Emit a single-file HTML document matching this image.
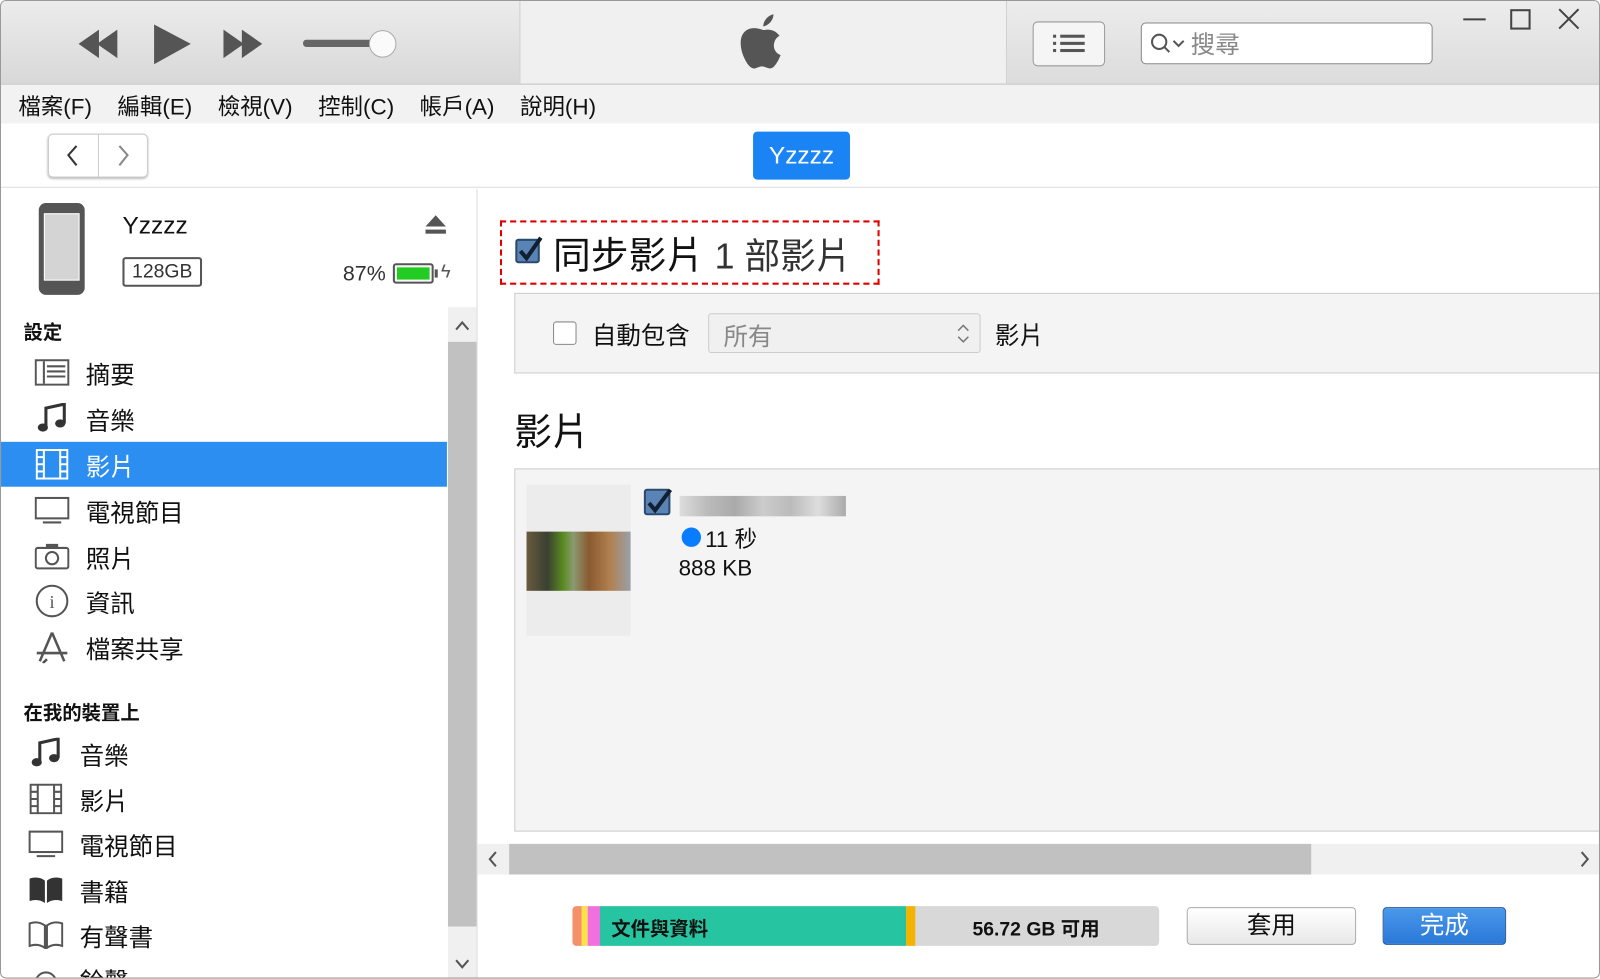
<!DOCTYPE html>
<html><head><meta charset="utf-8"><style>
*{box-sizing:border-box;margin:0;padding:0}
body{width:1600px;height:979px;overflow:hidden;background:#fff;font-family:"Liberation Sans","Noto Sans CJK TC",sans-serif;color:#111}
#w{position:absolute;left:0;top:0;width:1568px;height:959px;transform:scale(1.0204);transform-origin:0 0;border:1px solid #999;border-radius:6px;overflow:hidden;background:#fff}
.a{position:absolute}
.menu span{margin-right:25px}
.it{position:absolute;left:0;width:437px;height:44px;display:flex;align-items:center;font-size:24px}
.ic{width:34px;height:28px;margin-left:33px;margin-right:16px;display:flex;align-items:center;justify-content:center}
</style></head><body><div id="w">
<div class="a" style="left:0;top:0;width:508px;height:82px;background:linear-gradient(#ececec,#d8d8d8);border-bottom:1px solid #bbb"></div>
<div class="a" style="left:508px;top:0;width:478px;height:82px;background:#f0f0f0;border-left:1px solid #ccc;border-right:1px solid #ccc;border-bottom:1px solid #bbb"></div>
<div class="a" style="left:986px;top:0;width:582px;height:82px;background:linear-gradient(#ececec,#dcdcdc);border-bottom:1px solid #bbb"></div>
<svg class="a" style="left:70px;top:20px" width="320" height="45">
<polygon points="6,22 26,8 26,36" fill="#555"/><polygon points="24,22 44,8 44,36" fill="#555"/>
<polygon points="80,3 116,22 80,42" fill="#555"/>
<polygon points="148,8 168,22 148,36" fill="#555"/><polygon points="166,8 186,22 166,36" fill="#555"/>
<rect x="226" y="18" width="70" height="7" rx="3" fill="#666"/>
<circle cx="304" cy="22" r="13" fill="#fafafa" stroke="#aaa"/>
</svg>
<svg class="a" style="left:720px;top:12px" width="52" height="60" viewBox="0 0 52 60"><path d="M26 16c-4-1-10-3-16 1-7 5-6 17-2 26 3 7 7 12 11 11 3-1 5-2 7-2s5 2 8 2c4 0 8-8 10-13-5-2-8-7-6-13 1-3 3-5 5-6-3-4-7-6-12-6-2 0-4 1-5 0z" fill="#555"/><path d="M27 13c0-6 5-11 10-12 0 6-5 11-10 12z" fill="#555"/></svg>
<div class="a" style="left:1011px;top:20px;width:71px;height:44px;border:1px solid #999;border-radius:5px;background:#f5f5f5"></div>
<svg class="a" style="left:1030px;top:30px" width="34" height="24"><g fill="#555"><rect x="8" y="3" width="24" height="3"/><rect x="8" y="10" width="24" height="3"/><rect x="8" y="17" width="24" height="3"/><rect x="1" y="3" width="3" height="3"/><rect x="1" y="10" width="3" height="3"/><rect x="1" y="17" width="3" height="3"/></g></svg>
<div class="a" style="left:1117px;top:21px;width:286px;height:41px;border:1px solid #888;border-radius:5px;background:#fff;font-size:24px;color:#888;padding:1px 0 0 48px">搜尋</div>
<svg class="a" style="left:1126px;top:30px" width="38" height="24"><circle cx="9" cy="10" r="7" fill="none" stroke="#555" stroke-width="2"/><line x1="14" y1="15" x2="19" y2="20" stroke="#555" stroke-width="2"/><polyline points="23,9 28,14 33,9" fill="none" stroke="#555" stroke-width="2"/></svg>
<svg class="a" style="left:1430px;top:6px" width="130" height="24"><line x1="3" y1="12" x2="25" y2="12" stroke="#444" stroke-width="2"/><rect x="50" y="3" width="18" height="18" fill="none" stroke="#444" stroke-width="2"/><path d="M97 2L116 21M116 2L97 21" stroke="#444" stroke-width="2"/></svg>
<div class="a menu" style="left:0;top:82px;width:1568px;height:38px;background:#f2f2f2;font-size:22px;padding:4px 0 0 17px">
<span>檔案(F)</span><span>編輯(E)</span><span>檢視(V)</span><span>控制(C)</span><span>帳戶(A)</span><span>說明(H)</span></div>
<div class="a" style="left:0;top:120px;width:1568px;height:63px;background:#fff;border-bottom:1px solid #ddd"></div>
<div class="a" style="left:46px;top:130px;width:98px;height:43px;border:1px solid #ccc;border-radius:5px;box-shadow:0 1px 2px #bbb"></div>
<div class="a" style="left:95px;top:130px;width:1px;height:43px;background:#ccc"></div>
<svg class="a" style="left:46px;top:130px" width="98" height="43"><polyline points="28,12 20,21 28,31" fill="none" stroke="#333" stroke-width="2"/><polyline points="70,12 78,21 70,31" fill="none" stroke="#888" stroke-width="2"/></svg>
<div class="a" style="left:737px;top:128px;width:95px;height:47px;background:#1a84f5;border-radius:4px;color:#fff;font-size:24px;text-align:center;line-height:47px">Yzzzz</div>
<div class="a" style="left:466px;top:184px;width:1px;height:775px;background:#ddd"></div>
<div class="a" style="left:37px;top:198px;width:45px;height:90px;background:#555;border-radius:7px"></div>
<div class="a" style="left:42px;top:208px;width:35px;height:66px;background:#d4d4d4;border:1px solid #fff"></div>
<div class="a" style="left:119px;top:207px;font-size:24px">Yzzzz</div>
<div class="a" style="left:119px;top:251px;width:78px;height:29px;border:2px solid #555;border-radius:3px;font-size:19px;text-align:center;line-height:25px;color:#333">128GB</div>
<svg class="a" style="left:414px;top:209px" width="24" height="22"><polygon points="12,1 22,12 2,12" fill="#555"/><rect x="2" y="15" width="20" height="4" fill="#555"/></svg>
<div class="a" style="left:335px;top:256px;font-size:21px;color:#333">87%</div>
<div class="a" style="left:384px;top:257px;width:40px;height:20px;border:2px solid #555;border-radius:3px;padding:2px"><div style="width:100%;height:100%;background:#22cc22"></div></div>
<div class="a" style="left:425px;top:263px;width:3px;height:8px;background:#555"></div>
<div class="a" style="left:431px;top:255px;font-size:18px;color:#555">ϟ</div>
<div class="a" style="left:438px;top:300px;width:28px;height:659px;background:#f0f0f0"></div>
<div class="a" style="left:438px;top:334px;width:28px;height:573px;background:#c1c1c1"></div>
<svg class="a" style="left:438px;top:300px" width="28" height="659"><polyline points="8,22 14,15 20,22" fill="none" stroke="#555" stroke-width="2"/><polyline points="8,640 14,647 20,640" fill="none" stroke="#555" stroke-width="2"/></svg>
<div class="a" style="left:22px;top:310px;font-size:19px;font-weight:bold">設定</div>
<div class="it" style="top:342px"><div class="ic"><svg width="34" height="26"><rect x="1" y="1" width="32" height="24" fill="none" stroke="#555" stroke-width="2"/><path d="M9 2v22M12 7h18M12 12h18M12 17h18" stroke="#555" stroke-width="2"/></svg></div>摘要</div>
<div class="it" style="top:387px"><div class="ic"><svg width="30" height="30"><path d="M9 24V5l18-4v19" fill="none" stroke="#333" stroke-width="3"/><ellipse cx="6" cy="24" rx="5" ry="4" fill="#333"/><ellipse cx="23" cy="20" rx="5" ry="4" fill="#333"/></svg></div>音樂</div>
<div class="it" style="top:432px;background:#2b8ef0;color:#fff"><div class="ic"><svg width="32" height="30"><rect x="1" y="1" width="30" height="28" fill="none" stroke="#fff" stroke-width="2"/><path d="M8 1v28M24 1v28M1 8h7M1 15h7M1 22h7M24 8h7M24 15h7M24 22h7" stroke="#fff" stroke-width="2"/></svg></div>影片</div>
<div class="it" style="top:477px"><div class="ic"><svg width="34" height="28"><rect x="1" y="2" width="32" height="20" fill="none" stroke="#555" stroke-width="2"/><path d="M8 26h18" stroke="#555" stroke-width="2"/></svg></div>電視節目</div>
<div class="it" style="top:522px"><div class="ic"><svg width="34" height="28"><rect x="1" y="6" width="32" height="20" rx="2" fill="none" stroke="#555" stroke-width="2"/><rect x="11" y="2" width="12" height="5" fill="#555"/><circle cx="17" cy="16" r="6" fill="none" stroke="#555" stroke-width="2"/></svg></div>照片</div>
<div class="it" style="top:566px"><div class="ic"><svg width="34" height="34"><circle cx="17" cy="17" r="15" fill="none" stroke="#555" stroke-width="2"/><text x="17" y="24" font-size="18" text-anchor="middle" fill="#555" font-family="Liberation Serif">i</text></svg></div>資訊</div>
<div class="it" style="top:611px"><div class="ic"><svg width="34" height="32"><path d="M17 2L5 30M17 2l12 28M2 22h30M12 28l-4 4" fill="none" stroke="#555" stroke-width="2.5"/></svg></div>檔案共享</div>
<div class="a" style="left:22px;top:683px;font-size:19px;font-weight:bold">在我的裝置上</div>
<div class="it" style="top:715px"><div class="ic" style="margin-left:27px"><svg width="30" height="30"><path d="M9 24V5l18-4v19" fill="none" stroke="#333" stroke-width="3"/><ellipse cx="6" cy="24" rx="5" ry="4" fill="#333"/><ellipse cx="23" cy="20" rx="5" ry="4" fill="#333"/></svg></div>音樂</div>
<div class="it" style="top:760px"><div class="ic" style="margin-left:27px"><svg width="32" height="30"><rect x="1" y="1" width="30" height="28" fill="none" stroke="#555" stroke-width="2"/><path d="M8 1v28M24 1v28M1 8h7M1 15h7M1 22h7M24 8h7M24 15h7M24 22h7" stroke="#555" stroke-width="2"/></svg></div>影片</div>
<div class="it" style="top:804px"><div class="ic" style="margin-left:27px"><svg width="34" height="28"><rect x="1" y="2" width="32" height="20" fill="none" stroke="#555" stroke-width="2"/><path d="M8 26h18" stroke="#555" stroke-width="2"/></svg></div>電視節目</div>
<div class="it" style="top:849px"><div class="ic" style="margin-left:27px"><svg width="34" height="28"><path d="M1 3c6-2 11-1 15 2v22c-4-3-9-4-15-2zM33 3c-6-2-11-1-15 2v22c4-3 9-4 15-2z" fill="#333"/></svg></div>書籍</div>
<div class="it" style="top:893px"><div class="ic" style="margin-left:27px"><svg width="34" height="28"><path d="M1 3c6-2 11-1 15 2v22c-4-3-9-4-15-2zM33 3c-6-2-11-1-15 2v22c4-3 9-4 15-2z" fill="none" stroke="#555" stroke-width="2"/></svg></div>有聲書</div>
<div class="it" style="top:936px"><div class="ic" style="margin-left:27px"><svg width="30" height="28"><circle cx="15" cy="18" r="10" fill="none" stroke="#555" stroke-width="2"/></svg></div>鈴聲</div>
<div class="a" style="left:489px;top:215px;width:372px;height:63px;border:2px dashed #e00000"></div>
<div class="a" style="left:504px;top:233px;width:24px;height:24px;background:#5a84b6;border:2px solid #2a4a70;border-radius:3px"></div>
<svg class="a" style="left:504px;top:228px" width="30" height="30"><polyline points="5,17 11,24 25,4" fill="none" stroke="#102030" stroke-width="4"/></svg>
<div class="a" style="left:541px;top:219px;font-size:37px;white-space:nowrap">同步影片 <span style="font-size:35px;color:#333">1 部影片</span></div>
<div class="a" style="left:503px;top:286px;width:1070px;height:79px;background:#f4f4f4;border:1px solid #ccc"></div>
<div class="a" style="left:541px;top:314px;width:23px;height:23px;border:1px solid #888;border-radius:3px;background:#fff"></div>
<div class="a" style="left:579px;top:308px;font-size:24px">自動包含</div>
<div class="a" style="left:693px;top:306px;width:267px;height:39px;border:1px solid #ccc;border-radius:3px;background:#f0f0f0;font-size:24px;color:#888;padding:2px 0 0 14px">所有</div>
<svg class="a" style="left:934px;top:315px" width="18" height="22"><polyline points="4,8 9,3 14,8" fill="none" stroke="#777" stroke-width="1.5"/><polyline points="4,14 9,19 14,14" fill="none" stroke="#777" stroke-width="1.5"/></svg>
<div class="a" style="left:974px;top:308px;font-size:24px">影片</div>
<div class="a" style="left:503px;top:392px;font-size:37px">影片</div>
<div class="a" style="left:503px;top:458px;width:1070px;height:356px;background:#f4f4f4;border:1px solid #ccc"></div>
<div class="a" style="left:515px;top:474px;width:102px;height:148px;background:#ececec"></div>
<div class="a" style="left:515px;top:520px;width:102px;height:58px;background:linear-gradient(90deg,#6a5a40 0,#3a4030 20%,#5a8a20 35%,#8a9a70 45%,#8a5a30 60%,#b08050 80%,#9aa0a8 100%)"></div>
<div class="a" style="left:630px;top:478px;width:26px;height:26px;background:#5a84b6;border:2px solid #2a4a70;border-radius:3px"></div>
<svg class="a" style="left:630px;top:474px" width="30" height="30"><polyline points="5,18 11,25 26,5" fill="none" stroke="#102030" stroke-width="4"/></svg>
<div class="a" style="left:665px;top:485px;width:163px;height:20px;background:linear-gradient(90deg,#ddd,#bbb,#aaa,#ccc,#bbb,#ddd,#aaa)"></div>
<div class="a" style="left:667px;top:516px;width:19px;height:19px;border-radius:50%;background:#0a7cff"></div>
<div class="a" style="left:690px;top:510px;font-size:22px">11 秒</div>
<div class="a" style="left:664px;top:543px;font-size:22px">888 KB</div>
<div class="a" style="left:467px;top:826px;width:1101px;height:30px;background:#f0f0f0"></div>
<div class="a" style="left:498px;top:826px;width:786px;height:30px;background:#c1c1c1"></div>
<svg class="a" style="left:467px;top:826px" width="1101" height="30"><polyline points="18,8 12,15 18,22" fill="none" stroke="#555" stroke-width="2"/><polyline points="1082,8 1088,15 1082,22" fill="none" stroke="#555" stroke-width="2"/></svg>
<div class="a" style="left:560px;top:887px;width:575px;height:39px;background:#d8d8d8;border-radius:4px;overflow:hidden">
<div class="a" style="left:0;top:0;width:9px;height:39px;background:#f5906a"></div>
<div class="a" style="left:9px;top:0;width:6px;height:39px;background:#fbe04a"></div>
<div class="a" style="left:15px;top:0;width:12px;height:39px;background:#f070e0"></div>
<div class="a" style="left:27px;top:0;width:300px;height:39px;background:#26c4a0"></div>
<div class="a" style="left:327px;top:0;width:9px;height:39px;background:#f2b400"></div>
<div class="a" style="left:38px;top:8px;font-size:19px;font-weight:bold">文件與資料</div>
<div class="a" style="left:392px;top:8px;font-size:19px;font-weight:bold">56.72 GB 可用</div></div>
<div class="a" style="left:1162px;top:888px;width:166px;height:37px;border:1px solid #aaa;border-radius:4px;background:linear-gradient(#fff,#e8e8e8);font-size:24px;text-align:center;line-height:35px">套用</div>
<div class="a" style="left:1354px;top:888px;width:121px;height:37px;border:1px solid #2a5a9a;border-radius:4px;background:linear-gradient(#4a98ea,#2a78d8);font-size:24px;text-align:center;line-height:35px;color:#fff">完成</div>
</div></body></html>
